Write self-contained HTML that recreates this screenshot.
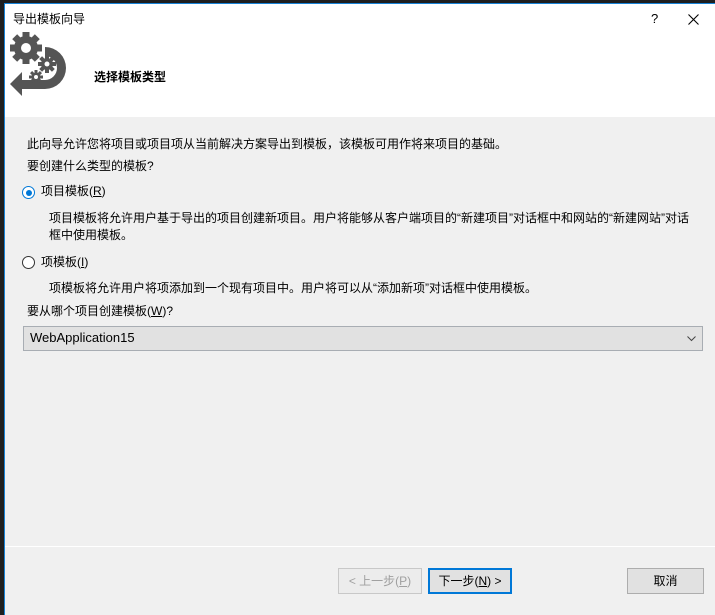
<!DOCTYPE html>
<html><head><meta charset="utf-8"><style>
body{margin:0;width:715px;height:615px;background:#1f1f1f;position:relative;overflow:hidden;font-family:"Liberation Sans","Noto Sans CJK SC",sans-serif;font-size:12px;color:#000}
.win{position:absolute;left:4px;top:3px;right:0;bottom:0;background:#f0f0f0;border-left:1px solid #1883d7;border-top:1px solid #1883d7}
.hdr{position:absolute;left:0;top:0;right:0;height:113px;background:#fff}
.t{position:absolute;white-space:nowrap;line-height:16px}
.radio{position:absolute;width:11px;height:11px;border:1px solid #333;border-radius:50%;background:#fff}
.btn{position:absolute;height:24px;border:1px solid #adadad;background:#e1e1e1;text-align:center;line-height:24px;box-sizing:content-box}
</style></head><body>
<div class="win">
<div class="hdr">
 <div class="t" style="left:8px;top:7px">导出模板向导</div>
 <div class="t" style="left:646px;top:7px;font-size:13px">?</div>
 <svg style="position:absolute;left:683px;top:10px" width="11" height="11"><path d="M0.5 0.5L10.5 10.5M10.5 0.5L0.5 10.5" stroke="#000" stroke-width="1.1"/></svg>
 <div class="t" style="left:89px;top:65px;font-weight:bold">选择模板类型</div>
</div>
<div class="t" style="left:22px;top:132px">此向导允许您将项目或项目项从当前解决方案导出到模板，该模板可用作将来项目的基础。</div>
<div class="t" style="left:22px;top:154px">要创建什么类型的模板?</div>
<div class="radio" style="left:17px;top:182px;border-color:#0078d7"><div style="position:absolute;left:2.5px;top:2.5px;width:6px;height:6px;border-radius:50%;background:#0078d7"></div></div>
<div class="t" style="left:36px;top:179px">项目模板(<u>R</u>)</div>
<div class="t" style="left:44px;top:206px">项目模板将允许用户基于导出的项目创建新项目。用户将能够从客户端项目的“新建项目”对话框中和网站的“新建网站”对话</div>
<div class="t" style="left:44px;top:223px">框中使用模板。</div>
<div class="radio" style="left:17px;top:252px"></div>
<div class="t" style="left:36px;top:250px">项模板(<u>I</u>)</div>
<div class="t" style="left:44px;top:276px">项模板将允许用户将项添加到一个现有项目中。用户将可以从“添加新项”对话框中使用模板。</div>
<div class="t" style="left:22px;top:299px">要从哪个项目创建模板(<u>W</u>)?</div>
<div style="position:absolute;left:18px;top:322px;width:678px;height:23px;border:1px solid #a8adb3;background:#e1e1e1">
 <div class="t" style="left:6px;top:3px;font-size:13px">WebApplication15</div>
 <svg style="position:absolute;right:6px;top:9px" width="9" height="6"><path d="M0.5 0.5L4.5 4.5L8.5 0.5" stroke="#444" fill="none"/></svg>
</div>
<div style="position:absolute;left:0;right:0;top:542px;height:1px;background:#fff"></div>
<div class="btn" style="left:333px;top:564px;width:82px;color:#a0a0a0;background:#ececec;border-color:#c8c8c8">&lt; 上一步(<u>P</u>)</div>
<div class="btn" style="left:423px;top:564px;width:80px;border:2px solid #0078d7;height:22px;line-height:22px">下一步(<u>N</u>) &gt;</div>
<div class="btn" style="left:622px;top:564px;width:75px">取消</div>
</div>
<svg style="position:absolute;left:0;top:0" width="80" height="100" viewBox="0 0 80 100">
 <g fill="#555">
  <path d="M45 47 A21 21 0 0 1 45 89 L22 89 L22 80 L45 80 A12 12 0 0 0 45 56 Z"/>
  <path d="M10 84 L22 72 L22 96 Z"/>
  <circle cx="26" cy="48" r="12"/>
  <g transform="translate(26 48)"><rect x="-3.5" y="-16" width="7" height="32"/><rect x="-16" y="-3.5" width="32" height="7"/><rect x="-3.5" y="-16" width="7" height="32" transform="rotate(45)"/><rect x="-3.5" y="-16" width="7" height="32" transform="rotate(-45)"/></g>
 </g>
 <circle cx="26" cy="48" r="5" fill="#fff"/>
 <g fill="#555">
  <circle cx="47" cy="64" r="6"/>
  <g transform="translate(47 64)"><rect x="-2" y="-9" width="4" height="18"/><rect x="-9" y="-2" width="18" height="4"/><rect x="-2" y="-9" width="4" height="18" transform="rotate(45)"/><rect x="-2" y="-9" width="4" height="18" transform="rotate(-45)"/></g>
  <circle cx="36" cy="77" r="4.5"/>
  <g transform="translate(36 77)"><rect x="-1.5" y="-7" width="3" height="14"/><rect x="-7" y="-1.5" width="14" height="3"/><rect x="-1.5" y="-7" width="3" height="14" transform="rotate(45)"/><rect x="-1.5" y="-7" width="3" height="14" transform="rotate(-45)"/></g>
 </g>
 <circle cx="47" cy="64" r="2.5" fill="#fff"/>
 <circle cx="36" cy="77" r="2" fill="#fff"/>
</svg>
</body></html>
